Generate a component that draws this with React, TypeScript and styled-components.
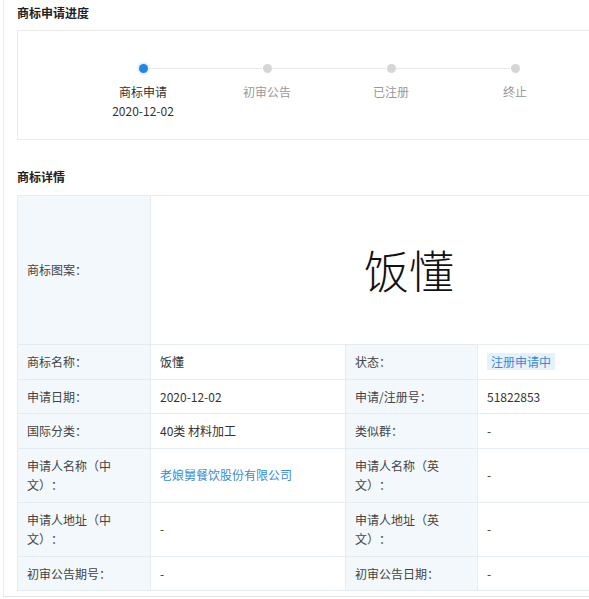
import React from "react";
import styled, { createGlobalStyle } from "styled-components";

const Global = createGlobalStyle`
  html, body { margin: 0; padding: 0; background: #fff; overflow: hidden; }
  body { font-family: "Microsoft YaHei", "Noto Sans CJK SC", "Noto Sans", sans-serif; color: #333; text-spacing-trim: space-all; }
`;

const Page = styled.div`
  padding-left: 3px;
  width: 720px;
`;

const Panel = styled.div`
  border-left: 1px solid #ececec;
  border-bottom: 1px solid #e4e4e4;
  padding: 3px 0 5px 13px;
`;

const Heading = styled.h3<{ $gap: number }>`
  margin: 0 0 ${(p) => p.$gap}px;
  font-size: 12px;
  font-weight: bold;
  line-height: 20px;
  height: 20px;
  color: #222;
`;

const StepBox = styled.div`
  width: 660px;
  height: 75px;
  border: 1px solid #ebebeb;
  padding: 33px 0 0 63px;
  box-sizing: content-box;
  display: flex;
  margin-bottom: 27px;
`;

const Step = styled.div<{ $last?: boolean }>`
  position: relative;
  width: 124px;
  display: flex;
  flex-direction: column;
  align-items: center;
  &::after {
    content: "";
    display: ${(p) => (p.$last ? "none" : "block")};
    position: absolute;
    top: 4px;
    left: 67px;
    width: 114px;
    height: 1px;
    background: #e9e9e9;
  }
`;

const Dot = styled.span<{ $active?: boolean }>`
  width: 9px;
  height: 9px;
  border-radius: 50%;
  background: ${(p) => (p.$active ? "#1f87e4" : "#d6d6d6")};
  box-shadow: ${(p) => (p.$active ? "0 0 0 2px #e4f1fc" : "none")};
`;

const StepLabel = styled.div<{ $active?: boolean }>`
  margin-top: 9px;
  font-size: 12px;
  line-height: 19px;
  color: ${(p) => (p.$active ? "#333" : "#999")};
  white-space: nowrap;
  text-align: center;
`;

const Table = styled.table`
  width: 650px;
  table-layout: fixed;
  border-collapse: collapse;
  font-size: 12px;
  line-height: 19.5px;
`;

const Label = styled.td`
  background: #f2f8fb;
  border: 1px solid #e6edf2;
  padding: 7px 12px 7px 9px;
  color: #444;
  vertical-align: middle;
`;

const Value = styled.td`
  border: 1px solid #e6edf2;
  padding: 7px 9px;
  color: #333;
  vertical-align: middle;
`;

const ImageCell = styled(Value)`
  height: 134px;
  text-align: center;
  font-size: 45px;
  font-weight: 300;
  line-height: 50px;
  color: #111;
  font-family: "Noto Sans CJK SC", sans-serif;
`;

const Link = styled.a`
  color: #3a8ad6;
  text-decoration: none;
`;

const Tag = styled.span`
  display: inline-block;
  background: #e5f1fb;
  color: #3a8ad6;
  padding: 0 4px;
  line-height: 17px;
`;

const steps = [
  { name: "商标申请", date: "2020-12-02", active: true },
  { name: "初审公告" },
  { name: "已注册" },
  { name: "终止" },
];

export default function App() {
  return (
    <Page>
      <Global />
      <Panel>
        <Heading $gap={7}>商标申请进度</Heading>
        <StepBox>
          {steps.map((s, i) => (
            <Step key={s.name} $last={i === steps.length - 1}>
              <Dot $active={s.active} />
              <StepLabel $active={s.active}>
                {s.name}
                {s.date && <div>{s.date}</div>}
              </StepLabel>
            </Step>
          ))}
        </StepBox>
        <Heading $gap={8}>商标详情</Heading>
        <Table>
          <colgroup>
            <col style={{ width: 133 }} />
            <col style={{ width: 195 }} />
            <col style={{ width: 132 }} />
            <col style={{ width: 190 }} />
          </colgroup>
          <tbody>
            <tr>
              <Label>商标图案：</Label>
              <ImageCell colSpan={3}>饭懂</ImageCell>
            </tr>
            <tr>
              <Label>商标名称：</Label>
              <Value>饭懂</Value>
              <Label>状态：</Label>
              <Value>
                <Tag>注册申请中</Tag>
              </Value>
            </tr>
            <tr>
              <Label>申请日期：</Label>
              <Value>2020-12-02</Value>
              <Label>申请/注册号：</Label>
              <Value>51822853</Value>
            </tr>
            <tr>
              <Label>国际分类：</Label>
              <Value>40类 材料加工</Value>
              <Label>类似群：</Label>
              <Value>-</Value>
            </tr>
            <tr>
              <Label>申请人名称（中文）：</Label>
              <Value>
                <Link href="#">老娘舅餐饮股份有限公司</Link>
              </Value>
              <Label>申请人名称（英文）：</Label>
              <Value>-</Value>
            </tr>
            <tr>
              <Label>申请人地址（中文）：</Label>
              <Value>-</Value>
              <Label>申请人地址（英文）：</Label>
              <Value>-</Value>
            </tr>
            <tr>
              <Label>初审公告期号：</Label>
              <Value>-</Value>
              <Label>初审公告日期：</Label>
              <Value>-</Value>
            </tr>
          </tbody>
        </Table>
      </Panel>
    </Page>
  );
}
